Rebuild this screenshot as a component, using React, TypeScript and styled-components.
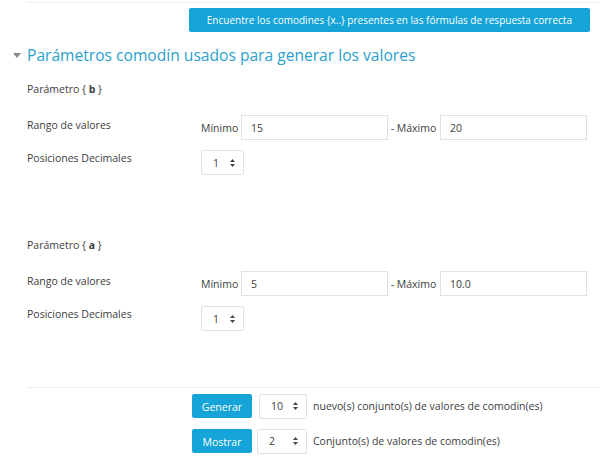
import { createGlobalStyle } from "styled-components";
import styled from "styled-components";

const GlobalStyle = createGlobalStyle`
  body {
    margin: 0;
    background: #fff;
    font-family: "Open Sans", "Liberation Sans", sans-serif;
    color: #3d3d3d;
  }
`;

const Page = styled.div`
  width: 600px;
  height: 465px;
  overflow: hidden;
  padding-top: 2px;
  box-sizing: border-box;
`;

const Rule = styled.div<{ $top?: number }>`
  margin-left: 27px;
  margin-top: ${(p) => p.$top ?? 0}px;
  border-top: 1px solid #eeeeee;
`;

const ButtonBar = styled.div`
  display: flex;
  justify-content: flex-end;
  padding-right: 10px;
  margin-top: 5px;
`;

const BlueButton = styled.button<{ $width?: number }>`
  height: 24px;
  ${(p) => (p.$width ? `width: ${p.$width}px;` : "padding: 0 18px;")}
  border: none;
  border-radius: 2px;
  background: #15a4d7;
  color: #fff;
  font-family: "Open Sans", "Liberation Sans", sans-serif;
  font-size: ${(p) => (p.$width ? 10.5 : 10)}px;
  line-height: 24px;
  flex-shrink: 0;
`;

const Legend = styled.div`
  display: flex;
  align-items: center;
  margin-top: 12px;
  padding-left: 13px;
  height: 22px;
  font-size: 15.6px;
  color: #2b9fcc;
  gap: 6px;
`;

const Caret = styled.span`
  width: 0;
  height: 0;
  border-left: 4px solid transparent;
  border-right: 4px solid transparent;
  border-top: 5px solid #888;
  margin-top: 1px;
`;

const Form = styled.div`
  padding-left: 27px;
`;

const ParamTitle = styled.div<{ $top: number }>`
  margin-top: ${(p) => p.$top}px;
  font-size: 10.5px;
  line-height: 16px;
  height: 16px;
`;

const Row = styled.div<{ $top: number }>`
  display: flex;
  margin-top: ${(p) => p.$top}px;
  height: 25px;
`;

const Label = styled.div<{ $pad?: number }>`
  width: 174px;
  flex-shrink: 0;
  font-size: 10.5px;
  line-height: 16px;
  padding-top: ${(p) => p.$pad ?? 0}px;
`;

const Controls = styled.div`
  display: flex;
  align-items: center;
  font-size: 10.5px;
`;

const InlineLabel = styled.span<{ $width: number }>`
  width: ${(p) => p.$width}px;
  flex-shrink: 0;
  white-space: nowrap;
`;

const TextBox = styled.div`
  width: 147px;
  height: 25px;
  box-sizing: border-box;
  border: 1px solid #e1e1e1;
  display: flex;
  align-items: center;
  padding-left: 9px;
  font-size: 10.5px;
`;

const SelectBox = styled.div<{ $width: number }>`
  width: ${(p) => p.$width}px;
  height: 25px;
  box-sizing: border-box;
  border: 1px solid #e1e1e1;
  border-radius: 2px;
  display: flex;
  align-items: center;
  justify-content: space-between;
  padding: 0 8px 0 11px;
  font-size: 10.5px;
  flex-shrink: 0;
`;

const Actions = styled.div`
  padding-left: 192px;
`;

const ActionRow = styled.div<{ $top: number }>`
  display: flex;
  align-items: center;
  margin-top: ${(p) => p.$top}px;
  height: 24px;
  font-size: 10.5px;
`;

const Spacer = styled.span<{ $w: number }>`
  width: ${(p) => p.$w}px;
  flex-shrink: 0;
`;

const Arrows = () => (
  <svg width="5" height="8" viewBox="0 0 5 8">
    <path d="M2.5 0 L5 3 L0 3 Z M2.5 8 L5 5 L0 5 Z" fill="#444" />
  </svg>
);

const Select = ({ value, width }: { value: string; width: number }) => (
  <SelectBox $width={width}>
    <span>{value}</span>
    <Arrows />
  </SelectBox>
);

const params = [
  { name: "b", min: "15", max: "20", top: 15 },
  { name: "a", min: "5", max: "10.0", top: 62 },
];

export default function App() {
  return (
    <Page>
      <GlobalStyle />
      <Rule />
      <ButtonBar>
        <BlueButton>
          Encuentre los comodines {"{x..}"} presentes en las fórmulas de respuesta correcta
        </BlueButton>
      </ButtonBar>
      <Legend>
        <Caret />
        Parámetros comodín usados para generar los valores
      </Legend>
      <Form>
        {params.map((p) => (
          <div key={p.name}>
            <ParamTitle $top={p.top}>
              Parámetro {"{ "}
              <b>{p.name}</b>
              {" }"}
            </ParamTitle>
            <Row $top={18}>
              <Label $pad={2}>Rango de valores</Label>
              <Controls>
                <InlineLabel $width={40}>Mínimo</InlineLabel>
                <TextBox>{p.min}</TextBox>
                <InlineLabel $width={52}>&nbsp;- Máximo</InlineLabel>
                <TextBox>{p.max}</TextBox>
              </Controls>
            </Row>
            <Row $top={10}>
              <Label>Posiciones Decimales</Label>
              <Controls>
                <Select value="1" width={43} />
              </Controls>
            </Row>
          </div>
        ))}
      </Form>
      <Rule $top={56} />
      <Actions>
        <ActionRow $top={6}>
          <BlueButton $width={60}>Generar</BlueButton>
          <Spacer $w={7} />
          <Select value="10" width={48} />
          <Spacer $w={6} />
          nuevo(s) conjunto(s) de valores de comodin(es)
        </ActionRow>
        <ActionRow $top={11}>
          <BlueButton $width={60}>Mostrar</BlueButton>
          <Spacer $w={5} />
          <Select value="2" width={50} />
          <Spacer $w={6} />
          Conjunto(s) de valores de comodin(es)
        </ActionRow>
      </Actions>
    </Page>
  );
}
